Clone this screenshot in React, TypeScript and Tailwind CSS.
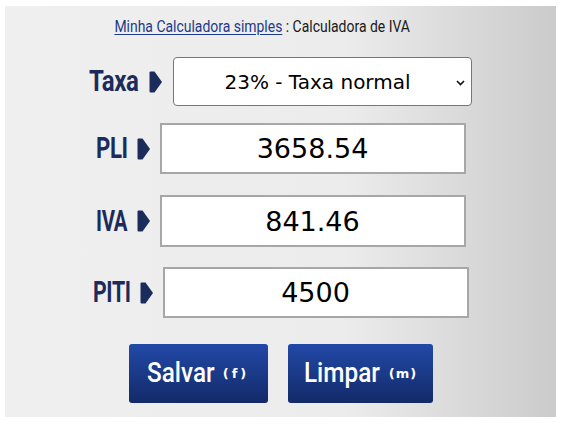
import React from "react";

const roboto = { fontFamily: 'Roboto, "DejaVu Sans", sans-serif' };

const Arrow = () => (
  <svg width="13" height="22" viewBox="0 0 13 22" className="shrink-0">
    <path d="M0.5 1.5 Q0.5 0.5 1.5 0.5 L5.5 0.5 L13 11 L5.5 21.5 L1.5 21.5 Q0.5 21.5 0.5 20.5 Z" fill="#1b2c5c" />
  </svg>
);

// narrow bold label, squeezed horizontally to match the condensed face
const Label = ({ text, width, squeeze }: { text: string; width: string; squeeze: string }) => (
  <span className={`block shrink-0 ${width}`}>
    <span
      className={`inline-block whitespace-nowrap origin-left ${squeeze} text-[30px] font-bold leading-none text-[#1b2c5c] tracking-[-0.5px]`}
      style={roboto}
    >
      {text}
    </span>
  </span>
);

const Field = ({
  label,
  width,
  squeeze,
  value,
  className,
}: {
  label: string;
  width: string;
  squeeze: string;
  value: string;
  className: string;
}) => (
  <div className={`flex items-center ${className}`}>
    <Label text={label} width={width} squeeze={squeeze} />
    <div className="ml-[9px] mr-[10px]">
      <Arrow />
    </div>
    <input
      readOnly
      value={value}
      className="w-[306px] h-full bg-white border-2 border-[#a7a7a7] text-center text-[27px] text-black outline-none"
      style={{ fontFamily: '"DejaVu Sans", sans-serif' }}
    />
  </div>
);

const Btn = ({
  text,
  hint,
  width,
  textWidth,
  hintClass,
}: {
  text: string;
  hint: string;
  width: string;
  textWidth: string;
  hintClass: string;
}) => (
  <button
    className={`${width} h-[59px] rounded-[3px] bg-[linear-gradient(to_bottom,#2249a8,#132a68)] text-white flex items-center justify-center`}
  >
    <span className={`block ${textWidth}`}>
      <span
        className="inline-block whitespace-nowrap origin-left scale-x-[0.9] text-[27px] font-medium leading-none"
        style={roboto}
      >
        {text}
      </span>
    </span>
    <span
      className={`text-[13px] font-bold ${hintClass}`}
      style={{ fontFamily: '"DejaVu Sans", sans-serif' }}
    >
      {hint}
    </span>
  </button>
);

export default function App() {
  return (
    <div className="w-[561px] h-[425px] bg-white pt-[6px] pl-[5px]">
      <div className="w-[551px] h-[411px] flex flex-col items-center pt-[10px] bg-[linear-gradient(to_right,#efefef_0%,#ececec_62%,#cbcbcb_100%)]">
        <div className="h-[20px] w-full flex justify-center pr-[36px]">
          <div
            className="inline-block whitespace-nowrap scale-x-[0.82] text-[17px] leading-[20px] text-[#1a1a1a]"
            style={roboto}
          >
            <a className="text-[#1e3a8a] underline underline-offset-2">Minha Calculadora simples</a>
            <span> : Calculadora de IVA</span>
          </div>
        </div>

        <div className="flex items-center h-[49px] mt-[21px]">
          <Label text="Taxa" width="w-[52px]" squeeze="scale-x-[0.8]" />
          <div className="ml-[8px] mr-[11px]">
            <Arrow />
          </div>
          <div className="relative w-[299px] h-full">
            <select
              className="w-full h-full appearance-none bg-white border border-[#767676] rounded-[4px] text-[20px] text-black text-center [text-align-last:center] pr-[10px]"
              style={{ fontFamily: '"DejaVu Sans", sans-serif' }}
              defaultValue="23"
            >
              <option value="23">23% - Taxa normal</option>
              <option value="13">13% - Taxa intermédia</option>
              <option value="6">6% - Taxa reduzida</option>
            </select>
            <svg
              width="9"
              height="6"
              viewBox="0 0 9 6"
              className="absolute right-[7px] top-[23px] pointer-events-none"
            >
              <path d="M1 1 L4.5 4.5 L8 1" stroke="#111" strokeWidth="1.6" fill="none" />
            </svg>
          </div>
        </div>

        <Field label="PLI" width="w-[32px]" squeeze="scale-x-[0.74]" value="3658.54" className="h-[51px] mt-[17px]" />
        <Field label="IVA" width="w-[32px]" squeeze="scale-x-[0.68]" value="841.46" className="h-[52px] mt-[21px]" />
        <Field label="PITI" width="w-[38px]" squeeze="scale-x-[0.71]" value="4500" className="h-[51px] mt-[20px]" />

        <div className="flex gap-[20px] mt-[26px]">
          <Btn text="Salvar" hint="(f)" width="w-[139px]" textWidth="w-[76px]" hintClass="tracking-[3px]" />
          <Btn text="Limpar" hint="(m)" width="w-[145px]" textWidth="w-[86px]" hintClass="tracking-[1px]" />
        </div>
      </div>
    </div>
  );
}
